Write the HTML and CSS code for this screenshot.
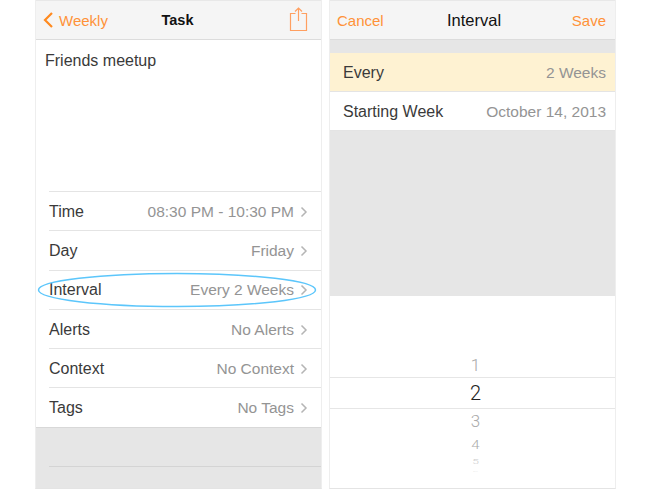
FILE: index.html
```html
<!DOCTYPE html>
<html lang="en">
<head>
<meta charset="utf-8">
<title>Task and Interval</title>
<link rel="stylesheet" href="styles.css">
</head>
<body>
<main class="stage">
  <section class="phone">
    <header class="nav">
      <div class="nav-side back">
        <svg class="back-icon" width="12" height="18" viewBox="0 0 12 18"><path d="M10 2 3 9l7 7" fill="none" stroke="#ff8a1f" stroke-width="2.2"/></svg>
        <span>Weekly</span>
      </div>
      <h1 class="nav-title bold">Task</h1>
      <div class="nav-side end">
        <svg class="share" width="20" height="26" viewBox="0 0 20 26"><path d="M6.500 6.500H1.500v17h16v-17h-5M9.500 14V1M6 4.500 9.500 1 13 4.500" fill="none" stroke="#ff9f60" stroke-width="1.200"/></svg>
      </div>
    </header>
    <div class="note">Friends meetup</div>
    <ul class="list">
      <li class="row"><span>Time</span><span class="value">08:30 PM - 10:30 PM</span><svg class="chev" width="8" height="12" viewBox="0 0 8 12"><path d="M1.500 1.500 6 6l-4.500 4.500" fill="none" stroke="#b5b5b5" stroke-width="1.500"/></svg></li>
      <li class="row"><span>Day</span><span class="value">Friday</span><svg class="chev" width="8" height="12" viewBox="0 0 8 12"><path d="M1.500 1.500 6 6l-4.500 4.500" fill="none" stroke="#b5b5b5" stroke-width="1.500"/></svg></li>
      <li class="row"><span>Interval</span><span class="value">Every 2 Weeks</span><svg class="chev" width="8" height="12" viewBox="0 0 8 12"><path d="M1.500 1.500 6 6l-4.500 4.500" fill="none" stroke="#b5b5b5" stroke-width="1.500"/></svg></li>
      <li class="row"><span>Alerts</span><span class="value">No Alerts</span><svg class="chev" width="8" height="12" viewBox="0 0 8 12"><path d="M1.500 1.500 6 6l-4.500 4.500" fill="none" stroke="#b5b5b5" stroke-width="1.500"/></svg></li>
      <li class="row"><span>Context</span><span class="value">No Context</span><svg class="chev" width="8" height="12" viewBox="0 0 8 12"><path d="M1.500 1.500 6 6l-4.500 4.500" fill="none" stroke="#b5b5b5" stroke-width="1.500"/></svg></li>
      <li class="row"><span>Tags</span><span class="value">No Tags</span><svg class="chev" width="8" height="12" viewBox="0 0 8 12"><path d="M1.500 1.500 6 6l-4.500 4.500" fill="none" stroke="#b5b5b5" stroke-width="1.500"/></svg></li>
    </ul>
    <div class="tray"><div class="tray-line"></div></div>
    <svg class="oval" width="280" height="38" viewBox="0 0 280 38"><ellipse cx="140" cy="19" rx="138.500" ry="16.500" fill="none" stroke="#5cc6fb" stroke-width="1.500"/></svg>
  </section>
  <section class="phone">
    <header class="nav">
      <div class="nav-side plain"><span>Cancel</span></div>
      <h1 class="nav-title shifted">Interval</h1>
      <div class="nav-side end plain"><span>Save</span></div>
    </header>
    <div class="gap"></div>
    <div class="setting selected"><span>Every</span><span class="value">2 Weeks</span></div>
    <div class="setting"><span>Starting Week</span><span class="value">October 14, 2013</span></div>
    <div class="fill"></div>
    <div class="picker">
      <div class="num n1">1</div>
      <div class="num n2">2</div>
      <div class="num n3">3</div>
      <div class="num n4">4</div>
      <div class="num n5">5</div>
      <div class="num n6">6</div>
    </div>
  </section>
</main>
</body>
</html>
```
FILE: styles.css
```css
* { box-sizing: border-box; }
html, body { margin: 0; padding: 0; background: #fff; }
body { font-family: "Liberation Sans", Arial, sans-serif; color: #333; }
.stage { display: flex; gap: 7px; padding-left: 35px; height: 489px; overflow: hidden; }
.phone { position: relative; width: 287px; height: 489px; display: flex; flex-direction: column; border-left: 1px solid #eeeeee; border-right: 1px solid #eeeeee; border-bottom: 1px solid #e4e4e4; }
.nav { flex: none; height: 40px; display: grid; grid-template-columns: 1fr auto 1fr; align-items: center; padding: 0 9px 0 7px; background: #f5f5f5; border-top: 1px solid #e8e8e8; border-bottom: 1px solid #dcdcdc; font-size: 15px; color: #ff9238; }
.nav-side { display: flex; align-items: center; }
.end { justify-content: flex-end; }
.back { gap: 5px; }
.back-icon { flex: none; margin-left: -1px; }
.share { margin-right: 3px; }
.nav-title { margin: 0; font-size: 16px; font-weight: 400; line-height: 18px; color: #111; }
.shifted { margin-left: 5px; font-size: 16.500px; }
.bold { font-size: 14.500px; font-weight: 700; }
.note { flex: none; height: 151px; padding: 12px 9px; font-size: 16px; line-height: 18px; color: #3a3a3a; }
.list { flex: none; list-style: none; margin: 0; padding: 0 0 0 13px; }
.row { height: 39.300px; display: flex; align-items: center; gap: 6px; padding-top: 1px; padding-right: 13px; border-top: 1px solid #e4e4e4; font-size: 16px; color: #3a3a3a; }
.value { margin-left: auto; color: #949494; font-size: 15.500px; }
.chev { flex: none; }
.tray { flex: 1; padding: 39px 0 0 13px; background: #e6e6e6; box-shadow: inset 0 1px 0 #d8d8d8; }
.tray-line { height: 1px; background: #d4d4d4; }
.oval { position: absolute; left: 1px; top: 271px; }
.gap { flex: none; height: 13px; background: #e6e6e6; }
.setting { flex: none; height: 39px; display: flex; align-items: center; padding: 1px 9px 0 13px; font-size: 16px; border-bottom: 1px solid #e4e4e4; color: #3a3a3a; }
.selected { background: #fef2d2; }
.fill { flex: none; height: 165px; background: #e6e6e6; }
.picker { flex: 1; padding-top: 59px; display: flex; flex-direction: column; align-items: center; }
.num { width: 100%; padding-left: 6px; text-align: center; color: #aaa; font-size: 17px; font-family: Roboto, "Liberation Sans", sans-serif; font-weight: 300; }
.n1 { height: 22px; line-height: 20px; }
.n2 { height: 32px; line-height: 30px; font-size: 20px; color: #222; border-top: 1px solid #e6e6e6; border-bottom: 1px solid #e6e6e6; }
.n3 { height: 25px; line-height: 25px; }
.n4 { height: 22px; line-height: 22px; font-size: 15px; transform: scaleY(0.85); }
.n5 { height: 12px; line-height: 12px; font-size: 12px; transform: scaleY(0.6); color: #ccc; }
.n6 { height: 6px; line-height: 6px; font-size: 10px; color: #e4e4e4; transform: scaleY(0.25); }
```
